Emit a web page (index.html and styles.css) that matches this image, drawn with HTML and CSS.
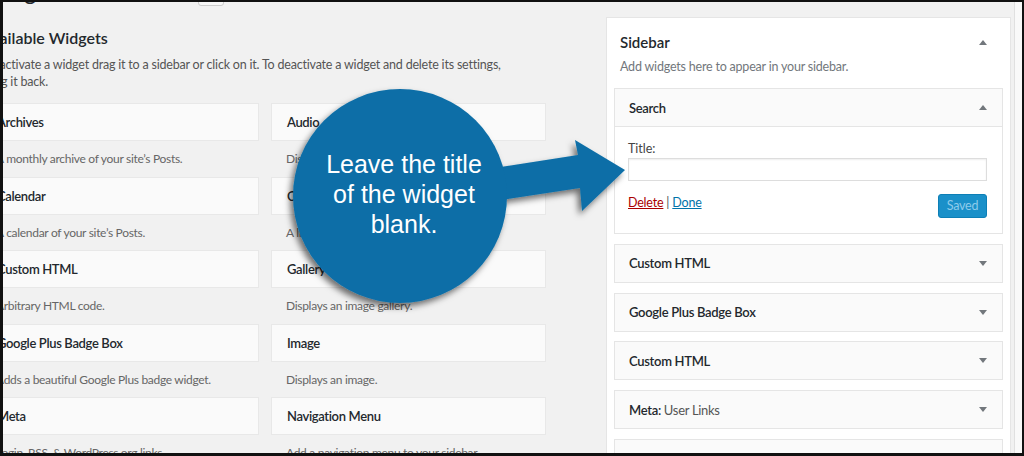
FILE: index.html
```html
<!DOCTYPE html>
<html lang="en">
<head>
    <meta charset="UTF-8">
    <title>Widgets</title>
    <link rel="stylesheet" href="styles.css">
</head>
<body>
<div class="frame">
    <div class="page">
        <div class="main-col">
            <div class="page-top">
                <h1>Widgets</h1>
                <span class="preview-btn"></span>
            </div>
            <h2 class="section-title">Available Widgets</h2>
            <p class="section-desc">To activate a widget drag it to a sidebar or click on it. To deactivate a widget and delete its settings, drag it back.</p>

            <div class="widget-grid">
                <div class="item"><div class="item-title">Archives</div><p class="item-desc">A monthly archive of your site’s Posts.</p></div>
                <div class="item"><div class="item-title">Audio</div><p class="item-desc">Displays an audio player.</p></div>
                <div class="item"><div class="item-title">Calendar</div><p class="item-desc">A calendar of your site’s Posts.</p></div>
                <div class="item"><div class="item-title">Categories</div><p class="item-desc">A list or dropdown of categories.</p></div>
                <div class="item"><div class="item-title">Custom HTML</div><p class="item-desc">Arbitrary HTML code.</p></div>
                <div class="item"><div class="item-title">Gallery</div><p class="item-desc">Displays an image gallery.</p></div>
                <div class="item"><div class="item-title">Google Plus Badge Box</div><p class="item-desc">Adds a beautiful Google Plus badge widget.</p></div>
                <div class="item"><div class="item-title">Image</div><p class="item-desc">Displays an image.</p></div>
                <div class="item"><div class="item-title">Meta</div><p class="item-desc">Login, RSS, &amp; WordPress.org links.</p></div>
                <div class="item"><div class="item-title">Navigation Menu</div><p class="item-desc">Add a navigation menu to your sidebar.</p></div>
            </div>
        </div>

        <div class="sidebar-col">
            <div class="sidebar-panel">
                <div class="sidebar-head">
                    <h2>Sidebar</h2>
                    <span class="arrow up"></span>
                </div>
                <p class="sidebar-desc">Add widgets here to appear in your sidebar.</p>

                <div class="widget open">
                    <div class="widget-top"><span>Search</span><span class="arrow up"></span></div>
                    <div class="widget-inside">
                        <label class="field-label">Title:</label>
                        <div class="field-input"></div>
                        <div class="widget-actions">
                            <span class="links"><a class="delete" href="#">Delete</a> | <a class="done" href="#">Done</a></span>
                            <span class="save-btn">Saved</span>
                        </div>
                    </div>
                </div>
                <div class="widget"><div class="widget-top"><span>Custom HTML</span><span class="arrow down"></span></div></div>
                <div class="widget"><div class="widget-top"><span>Google Plus Badge Box</span><span class="arrow down"></span></div></div>
                <div class="widget"><div class="widget-top"><span>Custom HTML</span><span class="arrow down"></span></div></div>
                <div class="widget"><div class="widget-top"><span>Meta: <span class="sub">User Links</span></span><span class="arrow down"></span></div></div>
                <div class="widget"><div class="widget-top"><span>Recent Posts</span><span class="arrow down"></span></div></div>
            </div>
        </div>

        <div class="edge"></div>
    </div>

    <!-- callout drawn over the screenshot -->
    <svg class="callout" width="1024" height="456" viewBox="0 0 1024 456">
        <defs>
            <filter id="drop" x="-20%" y="-20%" width="140%" height="140%">
                <feDropShadow dx="-3" dy="4" stdDeviation="3" flood-color="#000" flood-opacity="0.55"/>
            </filter>
        </defs>
        <g filter="url(#drop)" fill="#0b6ea7">
            <path d="M488,169 L578,155 L575,140 L625,170 L582,211 L580,188 L488,202 Z"/>
            <circle cx="400" cy="196" r="107"/>
        </g>
        <text class="callout-text" x="404" y="173">Leave the title</text>
        <text class="callout-text" x="404" y="203">of the widget</text>
        <text class="callout-text" x="404" y="233">blank.</text>
    </svg>
</div>
</body>
</html>
```

FILE: styles.css
```css
body {
    margin: 0;
    font-family: 'Lato', 'Open Sans', sans-serif;
    color: #23282d;
}

.frame {
    position: relative;
    width: 1024px;
    height: 456px;
    box-sizing: border-box;
    border-style: solid;
    border-color: #111;
    border-width: 2px 2px 3px 3px;
    background: #f1f1f1;
    overflow: hidden;
}

.page {
    display: flex;
    align-items: flex-start;
}

/* left: available widgets */
.main-col {
    flex: none;
    width: 570px;
    margin-left: -27px;
}

.page-top {
    display: flex;
    align-items: flex-end;
    margin-top: -25px;
    height: 29px;
}

.page-top h1 {
    margin: 0 0 0 6px;
    font-size: 23px;
    font-weight: 400;
    line-height: 29px;
}

.preview-btn {
    width: 26px;
    height: 28px;
    margin-left: 132px;
    box-sizing: border-box;
    border: 1px solid #ccc;
    border-radius: 3px;
    background: #f7f7f7;
}

.section-title {
    margin: 22px 0 0 5px;
    font-size: 16px;
    font-weight: 600;
    line-height: 20px;
}

.section-desc {
    max-width: 525px;
    margin: 7.5px 0 0 8px;
    font-size: 12.5px;
    letter-spacing: -0.2px;
    line-height: 17px;
    color: #555;
}

.widget-grid {
    display: grid;
    grid-template-columns: 278px 275px;
    column-gap: 12px;
    margin: 13.5px 0 0 5px;
}

.item {
    height: 73.5px;
}

.item-title {
    display: flex;
    align-items: center;
    height: 38px;
    box-sizing: border-box;
    padding-left: 15px;
    border: 1px solid #e8e8e8;
    background: #fafafa;
    font-size: 13px;
    font-weight: 600;
    letter-spacing: -0.35px;
}

.item-desc {
    margin: 9px 0 0;
    padding-left: 15px;
    font-size: 12px;
    letter-spacing: -0.3px;
    line-height: 17px;
    color: #666;
}

/* right: the sidebar */
.sidebar-col {
    flex: none;
    margin-left: 60px;
}

.sidebar-panel {
    width: 405px;
    box-sizing: border-box;
    margin-top: 15px;
    padding: 0 7px 20px;
    border: 1px solid #e5e5e5;
    background: #fff;
}

.sidebar-head {
    display: flex;
    align-items: center;
    justify-content: space-between;
    padding: 14px 16px 0 6px;
}

.sidebar-head h2 {
    margin: 0;
    font-size: 15px;
    font-weight: 600;
    line-height: 20px;
}

.sidebar-desc {
    margin: 6px 0 12px;
    padding-left: 6px;
    font-size: 12.5px;
    letter-spacing: -0.2px;
    line-height: 18px;
    color: #72777c;
}

.arrow {
    width: 0;
    height: 0;
    border-left: 4px solid transparent;
    border-right: 4px solid transparent;
}

.arrow.up {
    border-bottom: 5px solid #72777c;
}

.arrow.down {
    border-top: 5px solid #72777c;
}

.widget {
    margin-top: 9.75px;
    border: 1px solid #e5e5e5;
    background: #fafafa;
}

.widget.open {
    margin-top: 0;
}

.widget-top {
    display: flex;
    align-items: center;
    justify-content: space-between;
    height: 37px;
    padding: 0 15px 0 14px;
    font-size: 13px;
    font-weight: 600;
    letter-spacing: -0.3px;
}

.widget-top .sub {
    font-weight: 400;
    color: #555;
}

.widget-inside {
    padding: 13px 15px 15px 13px;
    border-top: 1px solid #e5e5e5;
    background: #fff;
}

.field-label {
    display: block;
    font-size: 12.5px;
    line-height: 18px;
    color: #444;
}

.field-input {
    height: 23px;
    box-sizing: border-box;
    border: 1px solid #ddd;
    box-shadow: inset 0 1px 2px rgba(0, 0, 0, 0.07);
}

.widget-actions {
    display: flex;
    justify-content: space-between;
    align-items: flex-start;
    margin-top: 13px;
    font-size: 12.5px;
    letter-spacing: -0.2px;
    line-height: 18px;
    color: #555;
}

.delete {
    color: #a00;
}

.done {
    color: #0073aa;
}

.save-btn {
    width: 49px;
    height: 24px;
    box-sizing: border-box;
    border: 1px solid #0d7fb6;
    border-radius: 3px;
    background: #1a90c9;
    color: #8dcbeb;
    font-size: 12.5px;
    line-height: 22px;
    text-align: center;
}

.edge {
    flex: none;
    width: 7px;
    height: 460px;
    margin-left: 3px;
    border-left: 1px solid #e0e0e0;
    background: #f9f9f9;
}

/* the blue speech circle */
.callout {
    position: absolute;
    left: -3px;
    top: -2px;
}

.callout-text {
    font-family: 'Liberation Sans', Arial, sans-serif;
    font-size: 25px;
    fill: #fff;
    text-anchor: middle;
}
```
